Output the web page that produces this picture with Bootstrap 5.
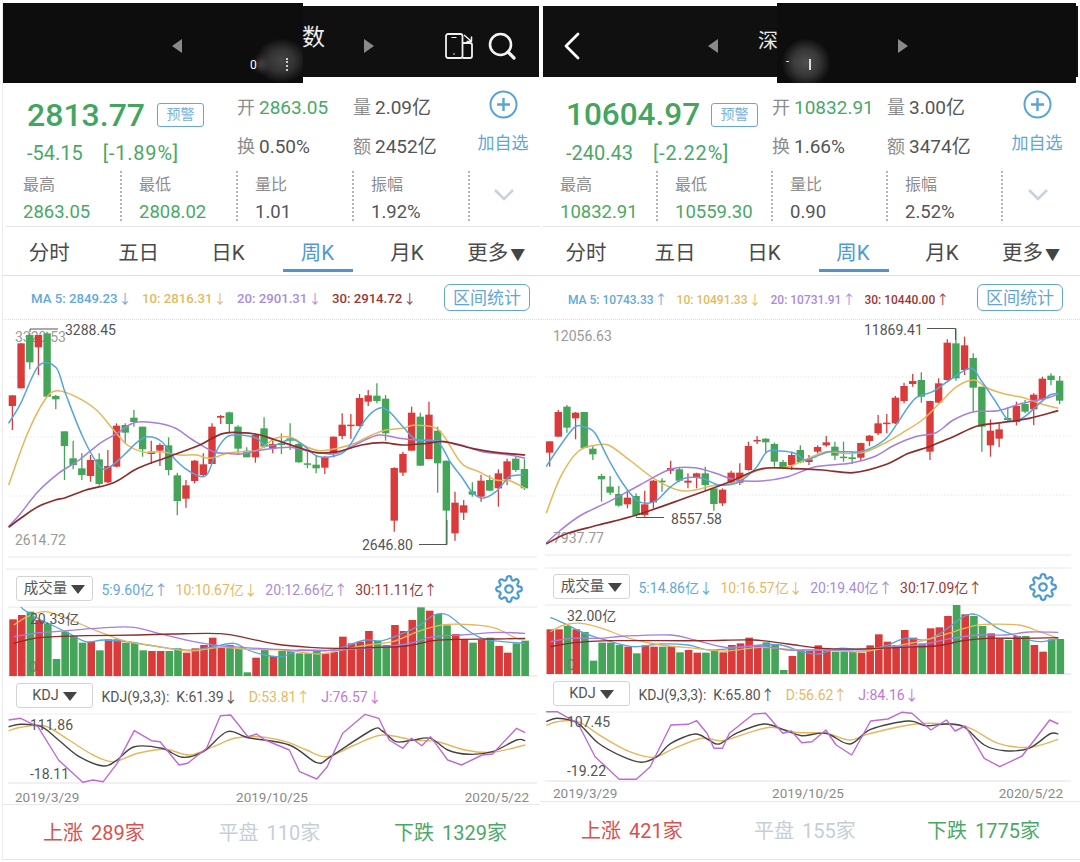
<!doctype html>
<html lang="zh">
<head>
<meta charset="utf-8">
<title>K</title>
<link href="https://cdn.jsdelivr.net/npm/bootstrap@5.3.0/dist/css/bootstrap.min.css" rel="stylesheet">
<style>
html,body{margin:0;background:#fff;width:1080px;height:862px;overflow:hidden}
body{font-family:Roboto,"Noto Sans CJK SC",sans-serif;color:#444;-webkit-font-smoothing:antialiased}
.pane{width:540px;height:860px;flex:none;border-bottom:1px solid #e6e6e6;position:relative;overflow:hidden}
.pane-a{--q:27px;--mid:210px;--mc:116px;--st:6px;--sc:116px;--tab:4.5px;--tw:89.5px;--ma:31px;--mag:10.5px;--mafs:13.2px;--hist:250px;--hdr:37px;--vp:16px;--date:21px;--dt:3px;--gear:18px;--bpl:43px;--bpr:34px;--bpt:16px;--apr:4px;border-left:1px solid #ececec;margin-left:2px;width:538px}
.pane-b{--q:26px;--mid:206px;--mc:115px;--st:3px;--sc:115px;--tab:1.5px;--tw:89px;--ma:28px;--mag:9px;--mafs:12px;--hist:248px;--hdr:37px;--vp:13px;--date:20px;--dt:1px;--gear:23px;--bpl:41px;--bpr:40px;--bpt:17px;--apr:8px}
.pane-a .hdr{margin-left:-3px;width:541px}
.pane-a .body-wrap{margin-left:-3px;width:541px}
.hdr{height:83px;padding-top:6px;position:relative}
.bar-top{height:71px;margin-left:3px;width:536px;background:#101011;position:relative;color:#fff}
.pane-b .bar-top{width:535px}
.patch{position:absolute;top:-3px;height:80px;background:#0d0d0e;overflow:hidden}
.pane-a .patch{left:0;width:300px}
.pane-b .patch{left:234px;width:299px}
.blur{position:absolute;bottom:0;top:35px;color:#fff}
.pane-a .blur{left:252px;width:48px;background:radial-gradient(ellipse at 55% 50%,#444 0,#333 35%,rgba(30,30,30,0) 70%)}
.pane-b .blur{left:4px;width:50px;background:radial-gradient(ellipse at 50% 55%,#505050 0,#363636 38%,rgba(30,30,30,0) 70%)}
.blur span{position:absolute;font-size:12px;line-height:14px;text-shadow:7px 0 6px #bbb}
.blur i{position:absolute;width:2px}
.pane-a .blur span{top:20px;left:-5px}
.pane-a .blur i{left:31px;top:20px;height:13px;border-left:2px dotted #ccc}
.pane-b .blur span{left:5px;top:17px;font-size:11px}
.pane-b .blur i{left:28px;top:21px;border-left:2px solid #ddd;height:11px}
.bar-row{position:relative;height:100%;display:flex;align-items:center;padding-top:8px}
.tri{width:0;height:0;border-top:7px solid transparent;border-bottom:7px solid transparent}
.tri-l{border-right:10px solid #8a8a8a}
.tri-r{border-left:10px solid #8a8a8a}
.ttl{font-size:23px;line-height:1;margin-top:-16px;color:#eee}
.pane-a .tri-l{margin-left:169px}
.pane-a .ttl{margin-left:120px}
.pane-a .tri-r{margin-left:39px}
.pane-a .ic1{margin-left:71px}
.pane-a .ic2{margin-left:15px}
.pane-b .chev{margin-left:21px}
.pane-b .tri-l{margin-left:128px}
.pane-b .ttl{margin-left:40px;margin-top:-10px;font-size:20px;color:#e8e8e8}
.pane-b .tri-r{margin-left:120px}
.q-top{height:87px}
.q-main{width:var(--mid);margin-left:var(--q);padding-top:14px;flex:none}
.q-price{font-size:32px;line-height:36px;font-weight:500;color:#43a55f}
.pane-b .q-price{font-size:31.5px}
.q-tag{width:47px;height:24px;border:1.5px solid #62a9da;border-radius:3px;color:#79b2da;font-size:14px;line-height:21px;text-align:center;margin-left:12px}
.pane-b .q-tag{margin-left:11px}
.q-chg{font-size:20px;line-height:24px;color:#4aa865;margin-top:8px;gap:20px}
.q-chg span+span{letter-spacing:.8px}
.q-mid{width:calc(var(--mc)*2);padding-top:6px;flex:none;display:grid;grid-template-columns:var(--mc) var(--mc);grid-auto-rows:39px;align-items:center;font-size:19px;color:#555}
.q-mid b{font-weight:400;color:#8d8d8d;font-size:18px;margin-right:4px}
.q-mid em{font-style:normal;color:#4aa865}
.q-add{flex:1;text-align:center;color:#62a6d8;font-size:17px;padding-top:7px;padding-right:var(--apr);line-height:1}
.q-add svg{display:block;margin:0 auto 16px}
.q-stats{height:57px;margin-left:var(--st);border-bottom:1px solid #e4e4e4}
.q-cell{width:var(--sc);height:50px;margin-top:1px;padding-left:17px;border-right:2px dotted #b5b5b5;flex:none}
.q-cell span{display:block;font-size:16px;line-height:28px;color:#8d8d8d}
.q-cell strong{display:block;font-weight:400;font-size:18.5px;line-height:28px;color:#4aa865;margin-top:-1px}
.q-cell strong.dk{color:#555}
.q-more{flex:1;display:flex;justify-content:center;align-items:center;height:50px;padding-right:var(--apr)}
.q-tabs{height:49px;padding-left:var(--tab);border-bottom:1px solid #dedede;flex-wrap:nowrap}
.q-tabs .nav-link{width:var(--tw);height:48px;padding:14px 0 0;text-align:center;font-size:20.5px;line-height:24px;color:#4a4a4a;border-bottom:3px solid transparent;white-space:nowrap;position:relative}
.q-tabs .nav-link.active{color:#4f9ad6}
.q-tabs .nav-link.active::after{content:"";position:absolute;left:10px;right:9px;bottom:0;height:3px;background:#4f93d0}
.q-tabs .nav-link small{font-size:15px;color:#444;margin-left:2px}
.q-ma{height:44px;padding-left:var(--ma);padding-right:10px;gap:var(--mag);font-size:var(--mafs);border-bottom:1px dotted #ddd;font-weight:500;white-space:nowrap}
.q-ma span{padding-top:2px}
.c-b{color:#5ea9de}.c-o{color:#e5b95f}.c-p{color:#a98bdc}.c-r{color:#993838}.c-k{color:#555}.c-j{color:#c377d8}
.q-ma i{font-style:normal;font-weight:400;font-size:13px;font-family:"Noto Sans CJK SC",sans-serif;margin-left:1px}
.q-range{width:86px;height:27px;padding:0;margin-left:auto;flex:none;font-size:17px;line-height:24px;border:1.5px solid #62a6d8;border-radius:6px;color:#5fa5d8;background:#fff}
.pane-a .q-range{margin-right:1px}
.pane-b .q-range{margin-right:7px}
.q-hist{height:var(--hist)}
.cv{display:block;overflow:visible}
.cv text{font-family:Roboto,"Noto Sans CJK SC",sans-serif}
.q-vh{height:var(--hdr);padding-left:var(--vp);font-size:14px;gap:7.5px;white-space:nowrap}
.q-vh>span{padding-top:3px}
.q-sel{width:77px;height:25px;padding:0;border:1px solid #d4d4d4;border-radius:3px;font-size:14.5px;line-height:23px;color:#555;background:#fff;margin-right:1px}
.q-sel span{display:inline-block;width:0;height:0;border-left:7px solid transparent;border-right:7px solid transparent;border-top:9px solid #444;margin-left:4px;vertical-align:-1px}
.gear{margin-left:auto;margin-right:var(--gear)}
.q-vol{height:70px}
.q-dates{height:var(--date);padding:var(--dt) 12px 0 15px;font-size:13.5px;color:#8a8a8a;border-bottom:1px solid #e9e9e9}
.pane-b .q-dates{padding-left:13px;padding-right:17px}
.q-foot{padding:var(--bpt) var(--bpr) 0 var(--bpl);font-size:20px;line-height:24px;white-space:nowrap}
.q-foot b{font-weight:400;margin-right:8px}
.f-r{color:#d9504c}.f-r em,.f-g em,.f-n em{font-style:normal}
.f-n{color:#c6ced6}
.f-g{color:#4aa865}
</style>
</head>
<body>
<div class="d-flex">
<main class="pane pane-a" data-k="a">
  <header class="hdr">
    <div class="bar-top">
      <div class="patch"><div class="blur"><span>0</span><i></i></div></div>
      <div class="bar-row">
        <div class="tri tri-l"></div>
        <div class="ttl">数</div>
        <div class="tri tri-r"></div>
        <svg class="ic1" width="28" height="26" viewBox="0 0 28 26" fill="none" stroke="#f0f0f0" stroke-width="1.800" stroke-linejoin="round"><rect x="1" y="1" width="16.500" height="24" rx="2"/><path d="M17.500 10H25a2 2 0 0 1 2 2v11a2 2 0 0 1-2 2h-7.500"/><path d="M19 2l7 6M26.500 3.500V8.500H21.500" stroke-width="1.500"/><path d="M6.500 4.500h5" stroke-width="1"/><circle cx="9" cy="21" r=".8" fill="#f0f0f0" stroke="none"/></svg>
        <svg class="ic2" width="28" height="28" viewBox="0 0 28 28" fill="none" stroke="#f4f4f4" stroke-width="2.600" stroke-linecap="round"><circle cx="12.500" cy="12.500" r="10.500"/><path d="M20 20l6 6" stroke-width="3.200"/></svg>
      </div>
    </div>
  </header>
  <div class="body-wrap">
  <section class="q-top d-flex">
    <div class="q-main">
      <div class="d-flex align-items-center"><span class="q-price">2813.77</span><span class="badge q-tag p-0 fw-normal">预警</span></div>
      <div class="d-flex q-chg"><span>-54.15</span><span>[-1.89%]</span></div>
    </div>
    <div class="q-mid">
      <div><b>开</b><em>2863.05</em></div><div><b>量</b>2.09亿</div>
      <div><b>换</b>0.50%</div><div><b>额</b>2452亿</div>
    </div>
    <div class="q-add"><svg width="29" height="29" viewBox="0 0 29 29" fill="none" stroke="#5aa3da" stroke-width="2"><circle cx="14.500" cy="14.500" r="13"/><path d="M14.500 8v13M8 14.500h13" stroke-width="2.400"/></svg>加自选</div>
  </section>
  <section class="q-stats d-flex">
    <div class="q-cell"><span>最高</span><strong>2863.05</strong></div>
    <div class="q-cell"><span>最低</span><strong>2808.02</strong></div>
    <div class="q-cell"><span>量比</span><strong class="dk">1.01</strong></div>
    <div class="q-cell"><span>振幅</span><strong class="dk">1.92%</strong></div>
    <div class="q-more"><svg width="22" height="14" viewBox="0 0 22 14" fill="none" stroke="#c7d2dc" stroke-width="2.600"><path d="M2 2l9 9 9-9"/></svg></div>
  </section>
  <nav class="nav q-tabs">
    <a class="nav-link" href="#">分时</a><a class="nav-link" href="#">五日</a><a class="nav-link" href="#">日K</a><a class="nav-link active" href="#">周K</a><a class="nav-link" href="#">月K</a><a class="nav-link" href="#">更多<small>▼</small></a>
  </nav>
  <section class="q-ma d-flex align-items-center">
    <span class="c-b">MA 5: 2849.23<i>↓</i></span><span class="c-o">10: 2816.31<i>↓</i></span><span class="c-p">20: 2901.31<i>↓</i></span><span class="c-r">30: 2914.72<i>↓</i></span>
    <button class="btn q-range" type="button">区间统计</button>
  </section>
  <section class="q-hist"><svg class="cv" id="ka" width="541" height="250">
    <text x="15" y="22" font-size="14" fill="#9a9a9a">3320.53</text>
    <text x="15" y="225" font-size="14" fill="#9a9a9a">2614.72</text>
    <text class="top" x="65" y="15" font-size="14" fill="#555">3288.45</text>
    <text class="top" x="362" y="230" font-size="14" fill="#555">2646.80</text>
  </svg></section>
  <section class="q-vh d-flex align-items-center">
    <button class="btn q-sel" type="button">成交量<span></span></button>
    <span class="c-b">5:9.60亿↑</span><span class="c-o">10:10.67亿↓</span><span class="c-p">20:12.66亿↑</span><span class="c-r">30:11.11亿↑</span>
    <svg class="gear" width="28" height="28" viewBox="0 0 24 24" fill="none" stroke="#4b9ad6" stroke-width="1.900"><circle cx="12" cy="12" r="3.200"/><path d="M19.400 15a1.650 1.650 0 0 0 .33 1.820l.06.06a2 2 0 0 1 0 2.830 2 2 0 0 1-2.830 0l-.06-.06a1.650 1.650 0 0 0-1.820-.33 1.650 1.650 0 0 0-1 1.510V21a2 2 0 0 1-2 2 2 2 0 0 1-2-2v-.09A1.650 1.650 0 0 0 9 19.400a1.650 1.650 0 0 0-1.820.33l-.06.06a2 2 0 0 1-2.830 0 2 2 0 0 1 0-2.830l.06-.06a1.650 1.650 0 0 0 .33-1.820 1.650 1.650 0 0 0-1.510-1H3a2 2 0 0 1-2-2 2 2 0 0 1 2-2h.09A1.650 1.650 0 0 0 4.600 9a1.650 1.650 0 0 0-.33-1.820l-.06-.06a2 2 0 0 1 0-2.830 2 2 0 0 1 2.830 0l.06.06a1.650 1.650 0 0 0 1.820.33H9a1.650 1.650 0 0 0 1-1.510V3a2 2 0 0 1 2-2 2 2 0 0 1 2 2v.09a1.650 1.650 0 0 0 1 1.510 1.650 1.650 0 0 0 1.820-.33l.06-.06a2 2 0 0 1 2.830 0 2 2 0 0 1 0 2.830l-.06.06a1.650 1.650 0 0 0-.33 1.820V9a1.650 1.650 0 0 0 1.510 1H21a2 2 0 0 1 2 2 2 2 0 0 1-2 2h-.09a1.650 1.650 0 0 0-1.510 1z"/></svg>
  </section>
  <section class="q-vol"><svg class="cv" id="va" width="541" height="70">
    <text class="top" x="30" y="17" font-size="14" fill="#555">20.33亿</text>
    <text class="top" x="29" y="65" font-size="14" fill="#777">0</text>
  </svg></section>
  <section class="q-vh d-flex align-items-center">
    <button class="btn q-sel" type="button">KDJ<span></span></button>
    <span class="c-k">KDJ(9,3,3):&nbsp; K:61.39↓</span><span class="c-o">&nbsp;D:53.81↑</span><span class="c-j">&nbsp;J:76.57↓</span>
  </section>
  <section class="q-vol"><svg class="cv" id="ja" width="541" height="70">
    <text class="top" x="30" y="16" font-size="14" fill="#555">111.86</text>
    <text class="top" x="30" y="65" font-size="14" fill="#555">-18.11</text>
  </svg></section>
  <section class="q-dates d-flex justify-content-between"><span>2019/3/29</span><span>2019/10/25</span><span>2020/5/22</span></section>
  <section class="q-foot d-flex justify-content-between">
    <span class="f-r"><b>上涨</b><em>289家</em></span><span class="f-n"><b>平盘</b><em>110家</em></span><span class="f-g"><b>下跌</b><em>1329家</em></span>
  </section>
  </div>
</main>

<main class="pane pane-b" data-k="b">
  <header class="hdr">
    <div class="bar-top">
      <div class="patch"><div class="blur"><span>-</span><i></i></div></div>
      <div class="bar-row">
        <svg class="chev" width="16" height="28" viewBox="0 0 16 28" fill="none" stroke="#fff" stroke-width="2.800" stroke-linecap="round" stroke-linejoin="round"><path d="M14 2L2 14l12 12"/></svg>
        <div class="tri tri-l"></div>
        <div class="ttl">深</div>
        <div class="tri tri-r"></div>
      </div>
    </div>
  </header>
  <div class="body-wrap">
  <section class="q-top d-flex">
    <div class="q-main">
      <div class="d-flex align-items-center"><span class="q-price">10604.97</span><span class="badge q-tag p-0 fw-normal">预警</span></div>
      <div class="d-flex q-chg"><span>-240.43</span><span>[-2.22%]</span></div>
    </div>
    <div class="q-mid">
      <div><b>开</b><em>10832.91</em></div><div><b>量</b>3.00亿</div>
      <div><b>换</b>1.66%</div><div><b>额</b>3474亿</div>
    </div>
    <div class="q-add"><svg width="29" height="29" viewBox="0 0 29 29" fill="none" stroke="#5aa3da" stroke-width="2"><circle cx="14.500" cy="14.500" r="13"/><path d="M14.500 8v13M8 14.500h13" stroke-width="2.400"/></svg>加自选</div>
  </section>
  <section class="q-stats d-flex">
    <div class="q-cell"><span>最高</span><strong>10832.91</strong></div>
    <div class="q-cell"><span>最低</span><strong>10559.30</strong></div>
    <div class="q-cell"><span>量比</span><strong class="dk">0.90</strong></div>
    <div class="q-cell"><span>振幅</span><strong class="dk">2.52%</strong></div>
    <div class="q-more"><svg width="22" height="14" viewBox="0 0 22 14" fill="none" stroke="#c7d2dc" stroke-width="2.600"><path d="M2 2l9 9 9-9"/></svg></div>
  </section>
  <nav class="nav q-tabs">
    <a class="nav-link" href="#">分时</a><a class="nav-link" href="#">五日</a><a class="nav-link" href="#">日K</a><a class="nav-link active" href="#">周K</a><a class="nav-link" href="#">月K</a><a class="nav-link" href="#">更多<small>▼</small></a>
  </nav>
  <section class="q-ma d-flex align-items-center">
    <span class="c-b">MA 5: 10743.33<i>↑</i></span><span class="c-o">10: 10491.33<i>↓</i></span><span class="c-p">20: 10731.91<i>↑</i></span><span class="c-r">30: 10440.00<i>↑</i></span>
    <button class="btn q-range" type="button">区间统计</button>
  </section>
  <section class="q-hist"><svg class="cv" id="kb" width="540" height="248">
    <text x="13" y="21" font-size="14" fill="#9a9a9a">12056.63</text>
    <text x="13" y="223" font-size="14" fill="#9a9a9a">7937.77</text>
    <text class="top" x="324" y="15" font-size="14" fill="#555">11869.41</text>
    <text class="top" x="131" y="204" font-size="14" fill="#555">8557.58</text>
  </svg></section>
  <section class="q-vh d-flex align-items-center">
    <button class="btn q-sel" type="button">成交量<span></span></button>
    <span class="c-b">5:14.86亿↓</span><span class="c-o">10:16.57亿↓</span><span class="c-p">20:19.40亿↑</span><span class="c-r">30:17.09亿↑</span>
    <svg class="gear" width="28" height="28" viewBox="0 0 24 24" fill="none" stroke="#4b9ad6" stroke-width="1.900"><circle cx="12" cy="12" r="3.200"/><path d="M19.400 15a1.650 1.650 0 0 0 .33 1.820l.06.06a2 2 0 0 1 0 2.830 2 2 0 0 1-2.830 0l-.06-.06a1.650 1.650 0 0 0-1.820-.33 1.650 1.650 0 0 0-1 1.510V21a2 2 0 0 1-2 2 2 2 0 0 1-2-2v-.09A1.650 1.650 0 0 0 9 19.400a1.650 1.650 0 0 0-1.820.33l-.06.06a2 2 0 0 1-2.830 0 2 2 0 0 1 0-2.830l.06-.06a1.650 1.650 0 0 0 .33-1.820 1.650 1.650 0 0 0-1.510-1H3a2 2 0 0 1-2-2 2 2 0 0 1 2-2h.09A1.650 1.650 0 0 0 4.600 9a1.650 1.650 0 0 0-.33-1.820l-.06-.06a2 2 0 0 1 0-2.830 2 2 0 0 1 2.830 0l.06.06a1.650 1.650 0 0 0 1.820.33H9a1.650 1.650 0 0 0 1-1.510V3a2 2 0 0 1 2-2 2 2 0 0 1 2 2v.09a1.650 1.650 0 0 0 1 1.510 1.650 1.650 0 0 0 1.820-.33l.06-.06a2 2 0 0 1 2.830 0 2 2 0 0 1 0 2.830l-.06.06a1.650 1.650 0 0 0-.33 1.820V9a1.650 1.650 0 0 0 1.510 1H21a2 2 0 0 1 2 2 2 2 0 0 1-2 2h-.09a1.650 1.650 0 0 0-1.510 1z"/></svg>
  </section>
  <section class="q-vol"><svg class="cv" id="vb" width="540" height="70">
    <text class="top" x="27" y="16" font-size="14" fill="#555">32.00亿</text>
    <text class="top" x="27" y="65" font-size="14" fill="#777">0</text>
  </svg></section>
  <section class="q-vh d-flex align-items-center">
    <button class="btn q-sel" type="button">KDJ<span></span></button>
    <span class="c-k">KDJ(9,3,3):&nbsp; K:65.80↑</span><span class="c-o">&nbsp;D:56.62↑</span><span class="c-j">&nbsp;J:84.16↓</span>
  </section>
  <section class="q-vol"><svg class="cv" id="jb" width="540" height="70">
    <text class="top" x="27" y="15" font-size="14" fill="#555">107.45</text>
    <text class="top" x="27" y="64" font-size="14" fill="#555">-19.22</text>
  </svg></section>
  <section class="q-dates d-flex justify-content-between"><span>2019/3/29</span><span>2019/10/25</span><span>2020/5/22</span></section>
  <section class="q-foot d-flex justify-content-between">
    <span class="f-r"><b>上涨</b><em>421家</em></span><span class="f-n"><b>平盘</b><em>155家</em></span><span class="f-g"><b>下跌</b><em>1775家</em></span>
  </section>
  </div>
</main>
</div>

<script>
const SX=1568/540,RED='#da3b3a',GRN='#44a458',C={b:'#57a5dc',o:'#e6b65a',p:'#a67fdc',r:'#8e2b2b',k:'#444',j:'#bf6ad4'};
const NS='http://www.w3.org/2000/svg';
const pts=s=>s.trim().split(/\s+/).map(p=>p.split(',').map(Number));
function curve(list,fx,fy){
  const p=list.map(([x,y])=>[fx(x),fy(y)]);let d=`M${p[0][0].toFixed(1)} ${p[0][1].toFixed(1)}`;
  for(let i=0;i<p.length-1;i++){
    const a=p[i-1]||p[i],b=p[i],c=p[i+1],e=p[i+2]||c;
    const c1=[b[0]+(c[0]-a[0])/6,b[1]+(c[1]-a[1])/6],c2=[c[0]-(e[0]-b[0])/6,c[1]-(e[1]-b[1])/6];
    d+=`C${c1[0].toFixed(1)} ${c1[1].toFixed(1)} ${c2[0].toFixed(1)} ${c2[1].toFixed(1)} ${c[0].toFixed(1)} ${c[1].toFixed(1)}`;
  }
  return d;
}
function poly(list,fx,fy){return 'M'+list.map(([x,y])=>fx(x).toFixed(1)+' '+fy(y).toFixed(1)).join('L')}
function line(d,c,w){return `<path d="${d}" fill="none" stroke="${c}" stroke-width="${w||1.2}" stroke-linejoin="round"/>`}
function hl(y,x1,x2,c,dash){return `<line x1="${x1}" x2="${x2}" y1="${y}" y2="${y}" stroke="${c}" stroke-width="1"${dash?' stroke-dasharray="1.500 2"':''}/>`}
function mount(id,under,over){
  const s=document.getElementById(id),gu=document.createElementNS(NS,'g'),go=document.createElementNS(NS,'g');
  gu.innerHTML=under;go.innerHTML=over;
  const first=s.querySelector('text.top');
  s.insertBefore(gu,s.firstChild);s.insertBefore(go,first);
}
function candles(id,rows,x0,step,lines,grid,notes,oy){
  const fx=x=>x/SX,fy=y=>y/3+oy;let o='';
  rows.trim().split('\n').forEach((r,i)=>{
    const [c,wt,bt,bb,wb]=r.trim().split(/\s+/);const col=c==='r'?RED:GRN,x=fx(x0+step*i);
    o+=`<line x1="${x}" x2="${x}" y1="${fy(+wt)}" y2="${fy(+wb)}" stroke="${col}" stroke-width="1.300"/>`;
    o+=`<rect x="${x-3.700}" y="${fy(+bt)}" width="7.400" height="${Math.max(1.500,fy(+bb)-fy(+bt))}" fill="${col}"/>`;
  });
  for(const k in lines)o+=line(curve(pts(lines[k]),fx,fy),C[k],k==='r'?1.700:1.500);
  o+=notes;
  mount(id,grid,o);
}
function vols(id,data,x0,step,base,lines,grid,oy){
  const fx=x=>x/SX,fy=y=>y/3+oy;let o='';
  data.trim().split(/\s+/).forEach((v,i)=>{
    const t=parseInt(v),col=v.endsWith('r')?RED:GRN,x=fx(x0+step*i);
    o+=`<rect x="${x-3.800}" y="${fy(t)}" width="7.600" height="${fy(base)-fy(t)}" fill="${col}"/>`;
  });
  for(const k in lines)o+=line(curve(pts(lines[k]),fx,fy),C[k],1.300);
  mount(id,grid,o);
}
function kdj(id,lines,grid,oy){
  const fx=x=>x/SX,fy=y=>y/3+oy;let o='';
  for(const k in lines)o+=line(k==='j'?poly(pts(lines[k]),fx,fy):curve(pts(lines[k]),fx,fy),C[k],1.400);
  mount(id,grid,o);
}

/* left */
candles('ka',`r 226 226 258 330
r 70 70 205 205
g 40 45 127 148
r 45 45 82 165
g 35 40 230 230
g 225 228 238 268
g 334 334 378 480
g 362 415 435 448
g 400 445 465 480
r 405 420 468 485
g 400 418 492 497
r 390 438 487 490
r 310 317 440 442
g 310 315 338 370
g 270 293 306 320
g 320 320 388 410
r 362 395 402 432
r 370 375 392 438
g 352 376 450 466
g 458 466 543 586
r 480 496 536 563
r 420 422 483 490
r 400 433 465 470
r 310 320 432 432
r 285 288 293 312
g 275 277 312 340
g 316 320 386 402
g 382 392 412 412
r 340 345 412 428
g 292 325 380 385
r 362 372 385 400
g 340 370 375 402
g 310 355 362 390
g 368 372 427 428
g 395 430 434 445
g 405 434 445 460
r 408 412 443 462
r 350 350 400 412
r 280 314 348 358
r 282 314 318 356
r 222 234 318 320
r 210 226 245 258
g 190 227 243 250
g 225 236 340 362
r 442 444 602 635
r 395 402 458 468
r 260 278 392 392
g 278 290 437 438
r 245 284 417 418
g 320 332 430 518
g 422 422 572 672
r 515 548 640 662
r 540 556 578 600
g 487 514 524 530
r 464 482 530 545
g 466 480 512 514
r 448 460 505 560
r 416 424 478 495
g 410 416 450 455
g 418 447 505 510`,36,25.2,{
o:'25,495 80,340 130,240 165,212 220,230 280,270 330,330 370,375 420,397 470,395 520,405 570,405 610,415 660,400 700,395 750,390 800,355 845,352 890,380 930,392 980,385 1030,370 1080,345 1120,330 1170,325 1200,316 1260,322 1290,350 1340,430 1390,455 1440,480 1480,482 1525,505',
p:'25,620 60,580 110,515 170,460 230,420 290,370 340,340 380,312 410,305 460,310 510,325 560,360 620,395 660,400 700,402 760,390 840,382 900,395 940,400 980,400 1040,370 1100,345 1160,355 1210,360 1270,362 1340,375 1400,395 1480,405 1525,415',
b:'25,310 60,250 112,138 162,142 190,220 240,350 290,440 320,440 360,405 400,365 430,350 470,365 510,420 560,460 600,465 630,390 660,350 700,345 745,355 770,375 800,375 845,358 880,375 920,408 970,408 1010,385 1060,300 1100,265 1130,275 1170,320 1210,360 1270,365 1310,430 1340,470 1370,515 1400,535 1440,515 1480,470 1520,465',
r:'25,622 60,595 110,560 160,540 190,533 250,510 330,488 400,445 490,410 580,375 650,340 740,342 800,360 860,380 920,398 980,395 1050,375 1110,368 1170,375 1240,370 1290,365 1370,385 1440,397 1525,405'
},hl(57,9,537,'#e6e6e6',1)+hl(117,9,537,'#e6e6e6',1)+hl(176,9,537,'#e6e6e6',1)+hl(237,8,537,'#e8e8e8')+hl(249,6,537,'#e8e8e8'),
`<path d="M30 12V9h28" fill="none" stroke="#555"/><path d="M419 224.500h28V200" fill="none" stroke="#555"/>`,0);
vols('va',`148r 135r 125g 150r 160g 267g 185g 198g 218g 215r 241g 208r 208r 218g 218g 241g 243r 243r 243g 235g 248r 235r 225r 203r 232r 225g 235g 307g 263r 240g 258r 243g 243g 250g 250g 243g 250r 245r 200r 220r 215r 183r 213g 225g 165r 183r 150r 112g 122r 132g 166g 192r 208r 218g 210r 203g 228r 248r 220g 212g`,38,25.2,318,{
b:'60,112 100,140 150,165 200,190 250,215 300,210 370,215 430,225 490,235 560,240 620,230 680,220 720,240 770,255 820,260 870,240 950,242 1000,230 1060,210 1110,212 1170,190 1220,165 1260,135 1300,135 1350,175 1400,205 1460,215 1525,220',
o:'40,165 80,140 130,125 180,140 240,165 300,190 370,215 450,228 550,243 640,232 720,238 820,240 930,252 1000,238 1070,225 1140,215 1200,190 1260,170 1300,163 1380,165 1440,175 1500,205 1525,208',
p:'40,200 100,190 160,185 240,178 320,172 390,172 460,190 540,210 620,225 700,232 800,238 900,242 980,240 1100,232 1180,222 1260,200 1340,195 1440,187 1525,190',
r:'40,220 100,205 160,200 250,197 400,195 500,192 640,191 720,205 800,222 900,232 980,235 1100,232 1180,228 1260,212 1340,208 1440,207 1525,205'
},hl(0,8,537,'#e8e8e8')+hl(69,8,537,'#dcdcdc'),-37);
kdj('ja',{
o:'25,482 60,472 130,468 200,510 270,555 330,575 400,550 480,538 550,555 620,530 680,505 750,500 830,515 890,540 950,560 1030,525 1110,495 1200,510 1270,515 1350,540 1430,547 1525,525',
k:'25,470 60,463 120,470 170,510 230,560 300,588 340,570 390,530 470,535 530,562 590,545 660,485 720,503 840,525 920,578 960,560 1080,480 1110,483 1150,515 1200,510 1250,505 1300,540 1360,553 1430,545 1500,510 1525,512',
j:'25,450 60,445 110,470 170,570 240,637 270,630 300,635 340,580 390,482 440,512 465,515 520,585 545,580 600,535 640,437 670,435 720,500 745,492 770,510 840,540 870,605 920,627 950,590 995,490 1060,433 1100,445 1130,510 1170,535 1195,505 1225,527 1250,500 1300,570 1340,585 1400,555 1430,552 1500,475 1525,488'
},hl(0,8,537,'#eee')+hl(69,8,537,'#e2e2e2'),-144);

/* right */
candles('kb',`r 364 364 398 440
r 270 276 350 350
g 255 260 323 338
r 276 278 295 358
g 276 276 384 384
g 376 386 403 420
g 462 468 478 545
g 468 500 518 525
g 498 522 557 560
r 510 533 553 565
g 520 528 585 590
r 512 553 585 590
r 480 482 547 565
g 475 482 487 515
r 422 444 452 462
g 440 448 482 485
r 460 482 488 505
r 458 460 473 505
g 440 460 495 510
g 505 505 552 572
r 505 509 550 558
r 452 458 488 495
r 430 458 488 495
r 365 378 450 452
r 348 360 364 372
g 355 356 367 400
g 368 372 425 440
g 420 426 442 445
r 395 405 435 450
g 376 390 427 430
r 405 418 426 435
r 376 381 395 400
r 348 367 376 380
g 365 380 407 420
g 365 410 414 425
g 395 412 417 432
r 368 369 413 423
r 345 347 363 378
r 285 310 340 345
r 282 308 312 340
r 228 233 310 312
r 188 198 243 250
r 162 183 192 200
g 157 180 230 248
r 242 243 395 420
r 175 190 248 250
r 58 68 180 182
g 25 70 175 182
r 50 76 150 165
g 100 114 203 275
g 200 200 320 395
r 298 332 376 410
r 312 328 356 382
g 262 294 300 305
r 245 258 306 316
g 240 252 275 280
r 220 224 268 315
r 170 176 238 240
g 160 167 180 195
g 168 182 242 252`,28,25.1,{
o:'18,580 60,470 110,395 160,376 200,376 260,420 330,475 400,510 450,510 500,497 560,490 610,460 660,445 720,440 780,415 830,395 880,400 940,397 1000,370 1050,340 1110,300 1160,250 1210,200 1260,180 1300,205 1350,222 1400,232 1450,250 1505,265',
p:'18,670 60,630 120,585 200,545 290,495 380,447 450,443 510,460 570,480 640,483 720,470 800,440 900,430 970,410 1030,375 1090,350 1150,338 1200,300 1260,275 1330,272 1400,250 1470,235 1505,222',
b:'18,440 50,390 100,322 130,322 160,340 200,420 240,490 280,540 310,550 340,540 380,500 420,475 470,475 520,495 570,490 600,470 630,440 660,395 700,393 740,400 770,420 800,410 840,395 880,395 930,395 970,380 1010,350 1050,290 1090,235 1140,215 1190,180 1250,145 1280,180 1320,240 1360,300 1400,295 1440,260 1480,225 1505,220',
r:'18,672 80,640 170,615 280,585 420,535 540,490 640,447 720,445 820,450 910,458 1000,435 1070,400 1130,380 1200,350 1270,318 1340,308 1420,295 1505,272'
},hl(57,5,531,'#e6e6e6',1)+hl(116,5,531,'#e6e6e6',1)+hl(175,5,531,'#e6e6e6',1)+hl(235,5,531,'#e8e8e8')+hl(248,5,531,'#e8e8e8'),
`<path d="M387 8.500h28.500V20" fill="none" stroke="#555"/><path d="M96 197.500h28" fill="none" stroke="#555"/>`,0);
vols('vb',`178r 178r 168g 178r 186g 272g 218g 218g 225g 230r 250g 226r 230r 230g 228r 247g 240r 248r 248g 243g 247r 225r 220r 203r 225r 217g 225g 300g 258r 237g 243r 226r 237r 245g 245g 245g 248r 226r 193r 215r 225r 180r 203r 220g 175r 172r 138r 105g 133r 138g 168g 190r 205r 210g 198r 198g 225r 245r 208g 207g`,30,25.1,312,{
b:'30,142 70,160 130,190 190,210 270,230 350,222 430,225 490,240 560,235 640,225 700,225 760,245 810,252 870,235 950,240 1010,225 1060,205 1120,210 1170,185 1230,140 1270,135 1330,175 1390,200 1450,215 1505,205',
o:'30,185 70,165 120,160 180,175 260,205 350,225 450,235 540,243 640,232 730,238 830,240 930,245 1020,230 1100,215 1170,195 1250,170 1290,163 1390,165 1450,185 1505,205',
p:'30,215 90,205 170,205 250,198 380,195 450,210 540,232 640,228 720,240 800,240 900,240 1000,232 1100,225 1180,208 1270,195 1350,195 1420,186 1505,187',
r:'30,230 100,218 200,212 350,212 480,212 620,210 720,222 820,235 930,237 1050,232 1150,228 1230,212 1300,205 1400,205 1505,203'
},hl(0,5,531,'#e8e8e8')+hl(69,5,531,'#dcdcdc'),-35);
kdj('jb',{
o:'18,467 50,455 110,455 180,500 260,545 330,562 390,535 470,505 530,512 600,490 670,472 740,487 830,490 900,510 960,490 1090,462 1180,462 1250,475 1330,520 1420,532 1505,508',
k:'18,455 50,445 110,460 170,520 240,560 295,577 340,560 380,520 450,492 490,510 520,522 570,490 650,462 710,480 760,497 830,490 900,522 960,478 1070,453 1120,467 1180,462 1230,470 1290,525 1350,542 1420,535 1480,492 1505,492',
j:'18,425 50,425 110,460 160,560 230,628 280,628 320,590 380,465 430,463 455,452 485,490 505,535 530,535 550,490 620,432 655,430 705,490 730,483 760,518 790,515 830,480 860,525 905,555 960,453 1010,447 1050,427 1080,430 1135,480 1180,450 1205,483 1235,468 1290,565 1335,590 1400,558 1480,450 1505,462'
},hl(0,5,531,'#eee')+hl(69,5,531,'#e2e2e2'),-142);
</script>
<script src="https://cdn.jsdelivr.net/npm/bootstrap@5.3.0/dist/js/bootstrap.bundle.min.js"></script>
</body>
</html>
